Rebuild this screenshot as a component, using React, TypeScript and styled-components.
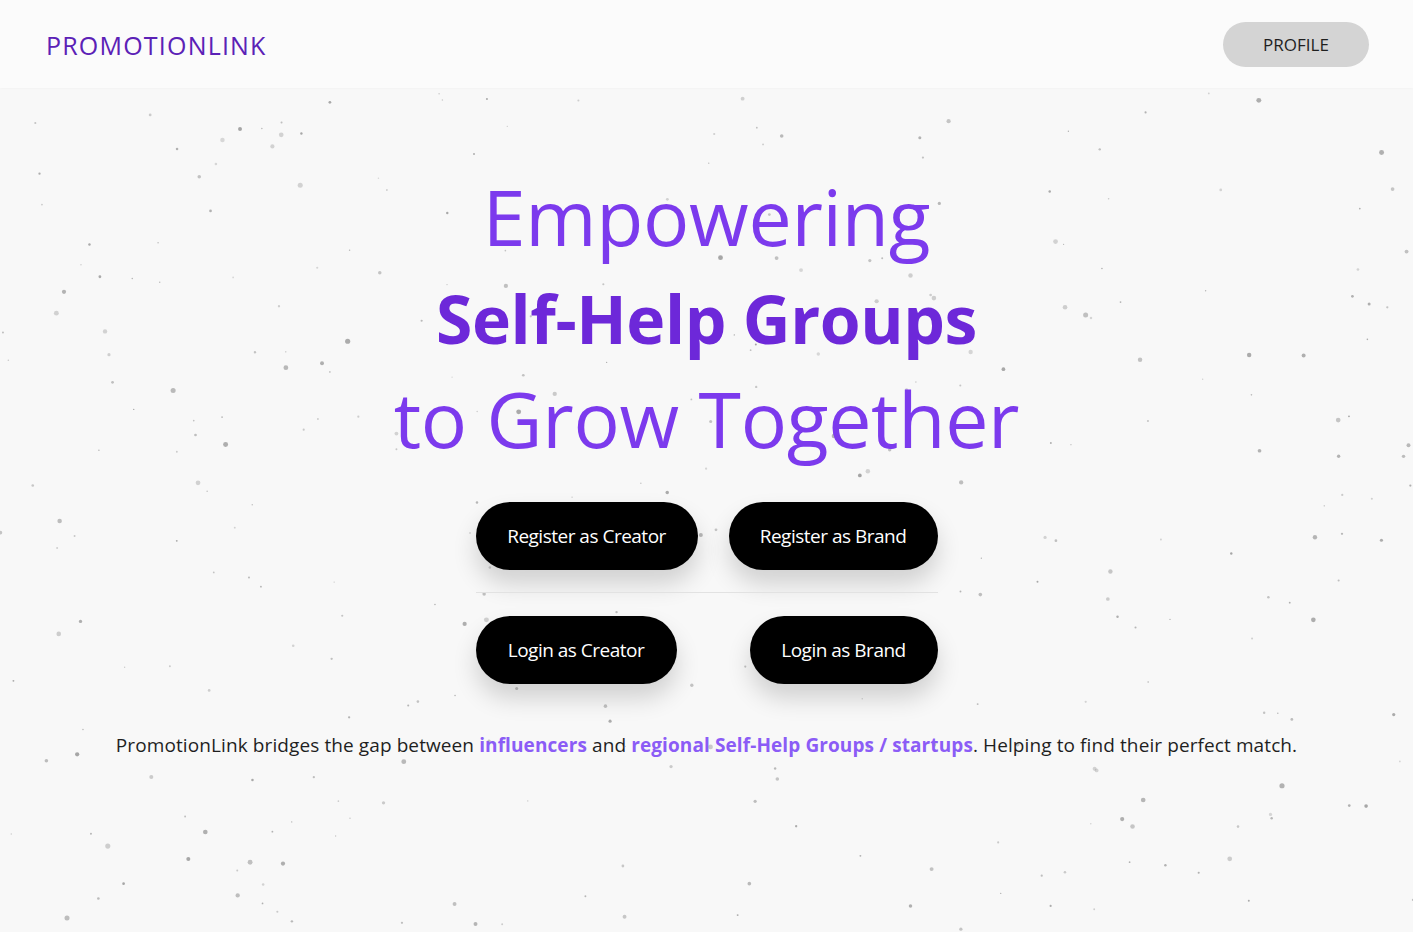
import styled, { createGlobalStyle } from 'styled-components';

const GlobalStyle = createGlobalStyle`
  html, body {
    margin: 0;
    padding: 0;
    background: #f8f8f8;
    font-family: 'Open Sans', 'Noto Sans', sans-serif;
  }
  * { box-sizing: border-box; }
`;

// seeded random so the dust is the same every render
const makeRandom = (seed: number) => () => {
  seed = (seed * 16807) % 2147483647;
  return (seed - 1) / 2147483646;
};

const rand = makeRandom(42);
const dots = Array.from({ length: 320 }, () => ({
  x: rand() * 1413,
  y: 92 + rand() * 840,
  r: rand() < 0.65 ? 0.6 + rand() * 0.8 : 1.5 + rand() * 1.1,
  o: 0.3 + rand() * 0.45,
}));

const Page = styled.div`
  position: relative;
  min-height: 932px;
  overflow: hidden;
`;

const Dust = styled.svg`
  position: absolute;
  inset: 0;
  width: 100%;
  height: 100%;
  pointer-events: none;
  z-index: 0;
`;

const Header = styled.header`
  position: relative;
  z-index: 1;
  height: 88px;
  display: flex;
  align-items: center;
  justify-content: space-between;
  padding: 0 44px 0 46px;
  background: #fbfbfb;
  box-shadow: 0 1px 2px rgba(0, 0, 0, 0.025);
`;

const Logo = styled.div`
  font-size: 25px;
  color: #5b21b6;
  letter-spacing: 1.2px;
  margin-top: 2px;
`;

const ProfileButton = styled.button`
  width: 146px;
  height: 45px;
  border: none;
  border-radius: 23px;
  background: #d4d4d4;
  color: #1f1f1f;
  font-family: inherit;
  font-size: 17px;
  margin-top: 1px;
`;

const Hero = styled.main`
  position: relative;
  z-index: 1;
  display: flex;
  flex-direction: column;
  align-items: center;
  padding-top: 76px;
`;

const TitleLine = styled.div<{ $bold?: boolean }>`
  font-size: ${(p) => (p.$bold ? '66px' : '77px')};
  font-weight: ${(p) => (p.$bold ? 700 : 400)};
  color: ${(p) => (p.$bold ? '#6d28d9' : '#7c3aed')};
  line-height: ${(p) => (p.$bold ? '96px' : '106px')};
  letter-spacing: ${(p) => (p.$bold ? '-0.4px' : '-0.3px')};
  white-space: nowrap;
`;

const Buttons = styled.div`
  width: 462px;
  margin-top: 30px;
  display: flex;
  flex-direction: column;
`;

const ButtonRow = styled.div`
  display: flex;
  justify-content: space-between;
`;

const Divider = styled.hr`
  border: none;
  border-top: 1px solid #e2e2e2;
  margin: 22px 0 23px;
  width: 100%;
`;

const ActionButton = styled.button<{ $w: number }>`
  width: ${(p) => p.$w}px;
  height: 68px;
  border: none;
  border-radius: 34px;
  background: #000;
  color: #fff;
  font-family: inherit;
  font-size: 19px;
  letter-spacing: -0.5px;
  box-shadow: 0 14px 24px rgba(0, 0, 0, 0.16);
  cursor: pointer;
`;

const Tagline = styled.p`
  margin: 48px 0 0;
  font-size: 19px;
  color: #1f1f1f;
  letter-spacing: 0.1px;
  white-space: nowrap;
`;

const Accent = styled.span`
  color: #8b5cf6;
  font-weight: 700;
`;

export default function App() {
  return (
    <Page>
      <GlobalStyle />
      <Dust viewBox="0 0 1413 932" preserveAspectRatio="none">
        {dots.map((d, i) => (
          <circle key={i} cx={d.x} cy={d.y} r={d.r} fill="#8a8a8a" opacity={d.o} />
        ))}
      </Dust>
      <Header>
        <Logo>PROMOTIONLINK</Logo>
        <ProfileButton>PROFILE</ProfileButton>
      </Header>
      <Hero>
        <TitleLine>Empowering</TitleLine>
        <TitleLine $bold>Self-Help Groups</TitleLine>
        <TitleLine>to Grow Together</TitleLine>
        <Buttons>
          <ButtonRow>
            <ActionButton $w={222}>Register as Creator</ActionButton>
            <ActionButton $w={209}>Register as Brand</ActionButton>
          </ButtonRow>
          <Divider />
          <ButtonRow>
            <ActionButton $w={201}>Login as Creator</ActionButton>
            <ActionButton $w={188}>Login as Brand</ActionButton>
          </ButtonRow>
        </Buttons>
        <Tagline>
          PromotionLink bridges the gap between <Accent>influencers</Accent> and{' '}
          <Accent>regional Self-Help Groups / startups</Accent>. Helping to find their perfect match.
        </Tagline>
      </Hero>
    </Page>
  );
}
